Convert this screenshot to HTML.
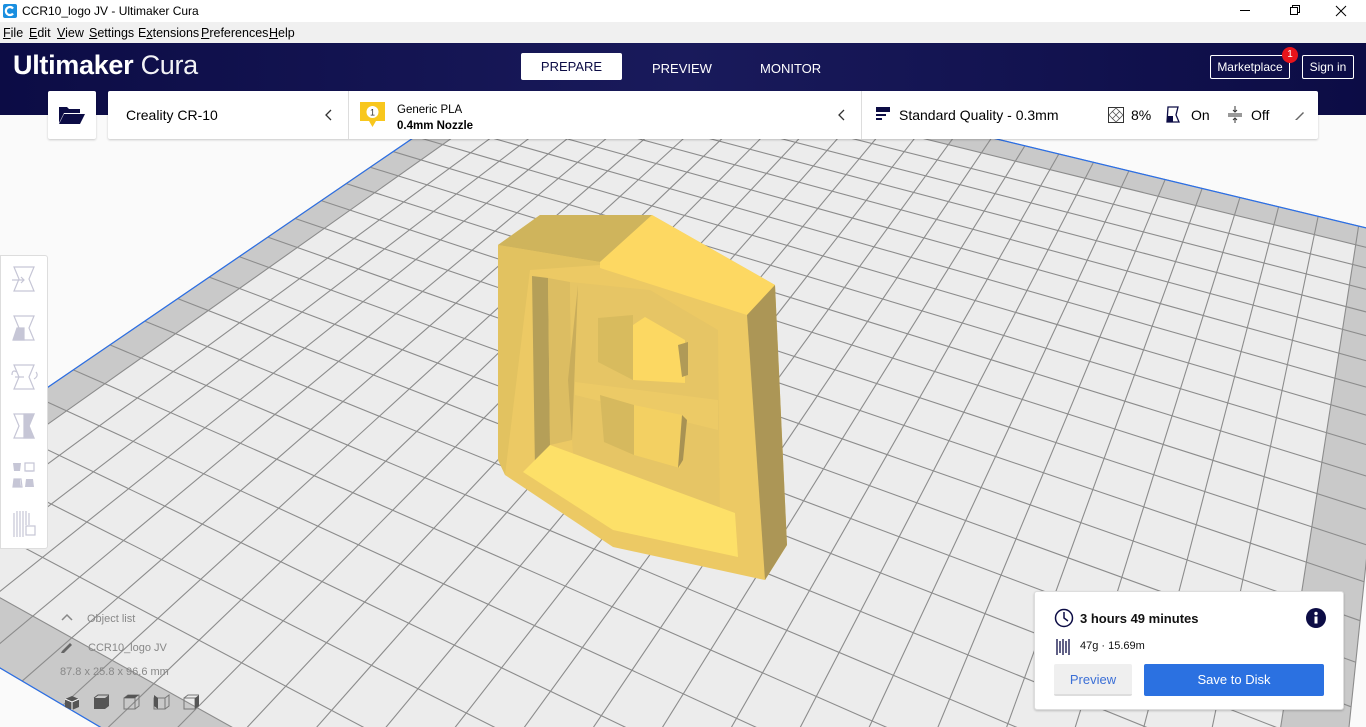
<!DOCTYPE html>
<html style="overflow:hidden;width:1366px;height:727px"><head><meta charset="utf-8"><style>
*{margin:0;padding:0;box-sizing:border-box}
body{width:1366px;height:727px;overflow:hidden;position:relative;background:#fafafa;font-family:"Liberation Sans",sans-serif}
.abs{position:absolute}
#title{left:0;top:0;width:1366px;height:22px;background:#fff;font-size:12px;color:#000}
#menu{left:0;top:22px;width:1366px;height:21px;background:#f0f0f0;font-size:12.5px}
#menu span{position:absolute;top:4px}
#menu u{text-decoration:underline}
#head{left:0;top:43px;width:1366px;height:72px;background:linear-gradient(90deg,#0c0c45,#191a5b 50%,#0c0c45)}
.card{background:#fff;box-shadow:0 1px 2px rgba(0,0,0,.2);border-radius:2px}
.tab{color:#fff;font-size:13px;top:61px}
.btnw{border:1px solid #fff;border-radius:2px;color:#fff;font-size:12px;text-align:center;line-height:22px}
</style></head><body>
<svg class="abs" style="left:0;top:0;overflow:hidden" width="1366" height="727" id="scene"></svg>

<div id="title" class="abs">
 <svg class="abs" style="left:3px;top:4px" width="14" height="14"><rect width="14" height="14" rx="2" fill="#1a8fe0"/><path d="M10 4.5A4 4 0 1 0 10 9.5" stroke="#fff" stroke-width="2.2" fill="none"/></svg>
 <span class="abs" style="left:22px;top:4px">CCR10_logo JV - Ultimaker Cura</span>
 <span class="abs" style="left:1240px;top:10px;width:10px;height:1px;background:#000"></span>
 <svg class="abs" style="left:1289px;top:4px" width="12" height="12"><rect x="1.5" y="3.5" width="7" height="7" fill="none" stroke="#000"/><path d="M3.5 3.5V1.5H10.5V8.5H8.5" fill="none" stroke="#000"/></svg>
 <svg class="abs" style="left:1335px;top:5px" width="12" height="12"><path d="M1 1L11 11M11 1L1 11" stroke="#000"/></svg>
</div>
<div id="menu" class="abs">
 <span style="left:3px"><u>F</u>ile</span><span style="left:29px"><u>E</u>dit</span><span style="left:57px"><u>V</u>iew</span><span style="left:89px"><u>S</u>ettings</span><span style="left:138px">E<u>x</u>tensions</span><span style="left:201px"><u>P</u>references</span><span style="left:269px"><u>H</u>elp</span>
</div>
<div id="head" class="abs">
 <div class="abs" style="left:13px;top:7px;color:#fff;font-size:27px;letter-spacing:-.3px"><b style="font-weight:600">Ultimaker</b> <span style="font-weight:300;opacity:.95">Cura</span></div>
 <div class="abs" style="left:521px;top:10px;width:101px;height:27px;background:#fff;border-radius:2px;font-size:13px;color:#0c0c45;text-align:center;line-height:27px">PREPARE</div>
 <div class="btnw abs" style="left:1210px;top:12px;width:80px;height:24px">Marketplace</div>
 <div class="abs" style="left:1282px;top:4px;width:16px;height:16px;border-radius:8px;background:#e8141b;color:#fff;font-size:10px;text-align:center;line-height:16px">1</div>
 <div class="btnw abs" style="left:1302px;top:12px;width:52px;height:24px">Sign in</div>
</div>
<div class="tab abs" style="left:652px">PREVIEW</div>
<div class="tab abs" style="left:760px">MONITOR</div>

<div class="card abs" style="left:48px;top:91px;width:48px;height:48px">
 <svg class="abs" style="left:10px;top:14px" width="28" height="20"><path d="M1 2H9L11 4H22V8H6L1 18Z" fill="#0c0c45"/><path d="M6 9H27L22 19H1Z" fill="#0c0c45"/></svg>
</div>
<div class="card abs" style="left:108px;top:91px;width:1210px;height:48px"></div>
<div class="abs" style="left:348px;top:91px;width:1px;height:48px;background:#ddd"></div>
<div class="abs" style="left:861px;top:91px;width:1px;height:48px;background:#ddd"></div>
<div class="abs" style="left:126px;top:107px;font-size:14px;color:#000">Creality CR-10</div>
<svg class="abs" style="left:325px;top:109px" width="8" height="12"><path d="M6 1L1 6L6 11" stroke="#333" fill="none" stroke-width="1.3"/></svg>
<svg class="abs" style="left:360px;top:102px" width="26" height="26"><path d="M0 0H25V19H16L12.5 25L9 19H0Z" fill="#f8c71d"/><circle cx="12.5" cy="10" r="6" fill="#fff"/><text x="12.5" y="13.5" font-size="9" text-anchor="middle" font-family="Liberation Sans" fill="#333">1</text></svg>
<div class="abs" style="left:397px;top:104px;font-size:11.5px;color:#000">Generic PLA</div>
<div class="abs" style="left:397px;top:120px;font-size:11.5px;font-weight:bold;color:#000">0.4mm Nozzle</div>
<svg class="abs" style="left:838px;top:109px" width="8" height="12"><path d="M6 1L1 6L6 11" stroke="#333" fill="none" stroke-width="1.3"/></svg>
<svg class="abs" style="left:876px;top:107px" width="14" height="16"><rect x="0" y="0" width="14" height="5" fill="#0c0c45"/><rect x="0" y="7" width="10" height="2" fill="#0c0c45"/><rect x="0" y="11" width="6" height="2" fill="#0c0c45"/></svg>
<div class="abs" style="left:899px;top:107px;font-size:14px">Standard Quality - 0.3mm</div>
<svg class="abs" style="left:1108px;top:107px" width="16" height="16"><rect x=".5" y=".5" width="15" height="15" fill="none" stroke="#333"/><path d="M1 8L8 1L15 8L8 15Z M4 4L12 12M12 4L4 12" fill="none" stroke="#555" stroke-width=".8"/></svg>
<div class="abs" style="left:1131px;top:107px;font-size:14px">8%</div>
<svg class="abs" style="left:1166px;top:106px" width="16" height="17"><path d="M2 1H12L10 9L13 16H1Z" fill="none" stroke="#0c0c45" stroke-width="1.3"/><path d="M1 10H7V16H1Z" fill="#0c0c45"/></svg>
<div class="abs" style="left:1191px;top:107px;font-size:14px">On</div>
<svg class="abs" style="left:1228px;top:106px" width="14" height="17"><path d="M0 8H14M0 10H14M7 0V6M7 12V17M5 4L7 6L9 4M5 14L7 12L9 14" stroke="#333" fill="none"/></svg>
<div class="abs" style="left:1251px;top:107px;font-size:14px">Off</div>
<svg class="abs" style="left:1294px;top:109px" width="12" height="12"><path d="M2 10L9 3L10 4L3 11L1 11Z" fill="#666"/></svg>

<div class="card abs" style="left:0;top:255px;width:48px;height:294px;border:1px solid #ddd;border-radius:0 3px 3px 0;box-shadow:none">
 <svg width="48" height="294" style="position:absolute;left:-1px;top:-1px" fill="none" stroke="#c6c6d6" stroke-width="1.2">
  <g transform="translate(12,12)"><path d="M2 0H22L17 12L22 24H2L7 12Z"/><path d="M0 13H12M9 10L12 13L9 16" /></g>
  <g transform="translate(12,61)"><path d="M2 0H22L17 12L22 24H2L7 12Z"/><path d="M1 24L5 12H12V24Z" fill="#c6c6d6"/></g>
  <g transform="translate(12,110)"><path d="M2 0H22L17 12L22 24H2L7 12Z"/><path d="M0 10Q0 4 5 7M24 7Q27 11 22 14M3 12H12"/></g>
  <g transform="translate(12,159)"><path d="M2 0H22L17 12L22 24H2L7 12Z"/><path d="M12 0V24M12 0H22L17 12L22 24H12Z" fill="#c6c6d6"/></g>
  <g transform="translate(12,208)" fill="#c6c6d6"><path d="M1 0H9L8 8H2Z M1 24H9L8 16H2Z M13 24H22L21 16H14Z" stroke="none"/><path d="M13 0H22V8H13Z" fill="none"/><path d="M2 16H9L10 24H1Z M14 8H21" fill="none"/></g>
  <g transform="translate(12,256)"><path d="M2 2V26M5 0V26M8 0V26M11 0V26M14 0V14M17 2V14"/><rect x="14" y="15" width="9" height="9" fill="#fff"/></g>
 </svg>
</div>

<svg class="abs" style="left:60px;top:612px" width="14" height="10"><path d="M2 8L7 3L12 8" stroke="#888" fill="none" stroke-width="1.5"/></svg>
<div class="abs" style="left:87px;top:613px;font-size:11px;color:#888">Object list</div>
<svg class="abs" style="left:60px;top:640px" width="14" height="14"><path d="M2 11L10 3L12 5L4 13L1 13Z" fill="#666"/></svg>
<div class="abs" style="left:88px;top:642px;font-size:11px;color:#888">CCR10_logo JV</div>
<div class="abs" style="left:60px;top:666px;font-size:11px;color:#888">87.8 x 25.8 x 96.6 mm</div>
<svg class="abs" style="left:62px;top:694px" width="140" height="20">
 <path d="M10 2L17 5V13L10 16L3 13V5Z" fill="#555"/><path d="M3 5L10 8L17 5M10 8V16" stroke="#fafafa" fill="none"/>
 <path d="M32 4H43L47 1V12L43 15H32Z" fill="#555"/><path d="M32 4L36 1H47" stroke="#555" fill="none"/>
 <path d="M62 4H73V15H62Z M62 4L66 1H77V12L73 15" stroke="#777" fill="none"/><path d="M62 4L66 1H77L73 4Z" fill="#555"/>
 <path d="M92 4H103V15H92Z M103 4L107 1V12L103 15" stroke="#777" fill="none"/><path d="M92 1L96 4V15L92 12Z" fill="#555"/>
 <path d="M122 4H133V15H122Z M122 4L126 1H137" stroke="#777" fill="none"/><path d="M133 4L137 1V12L133 15Z" fill="#555"/>
</svg>

<div class="card abs" style="left:1034px;top:591px;width:310px;height:119px;border:1px solid #ddd;border-radius:3px">
 <svg class="abs" style="left:19px;top:16px" width="20" height="20"><circle cx="10" cy="10" r="8.5" fill="none" stroke="#0c0c45" stroke-width="1.5"/><path d="M10 4V10L14 13" stroke="#0c0c45" fill="none" stroke-width="1.5"/></svg>
 <div class="abs" style="left:45px;top:19px;font-size:13px;font-weight:bold;color:#111">3 hours 49 minutes</div>
 <svg class="abs" style="left:271px;top:16px" width="20" height="20"><circle cx="10" cy="10" r="10" fill="#0c0c45"/><rect x="8.5" y="8.5" width="3" height="7" fill="#fff"/><circle cx="10" cy="5.5" r="1.7" fill="#fff"/></svg>
 <svg class="abs" style="left:21px;top:46px" width="16" height="18"><path d="M1 1V17M4 3V15M7 1V17M10 3V15M13 1V17" stroke="#0c0c45" stroke-width="1.3"/></svg>
 <div class="abs" style="left:45px;top:48px;font-size:11px;color:#111">47g · 15.69m</div>
 <div class="abs" style="left:19px;top:72px;width:78px;height:32px;background:#efefef;border-bottom:2px solid #ddd;border-radius:2px;color:#3b6fd6;font-size:13px;text-align:center;line-height:31px">Preview</div>
 <div class="abs" style="left:109px;top:72px;width:180px;height:32px;background:#2b71e1;border-radius:2px;color:#fff;font-size:13px;text-align:center;line-height:31px">Save to Disk</div>
</div>

<script>
(function(){
var s=document.getElementById('scene'),NS='http://www.w3.org/2000/svg';
var B=[564,35],R=[1400,236],F=[1277,1421],L=[-195,553];
function H(){var x0=B[0],y0=B[1],x1=R[0],y1=R[1],x2=F[0],y2=F[1],x3=L[0],y3=L[1];
var dx1=x1-x2,dx2=x3-x2,dy1=y1-y2,dy2=y3-y2,sx=x0-x1+x2-x3,sy=y0-y1+y2-y3;
var d=dx1*dy2-dx2*dy1,g=(sx*dy2-dx2*sy)/d,h=(dx1*sy-sx*dy1)/d;
return [x1-x0+g*x1,x3-x0+h*x3,x0,y1-y0+g*y1,y3-y0+h*y3,y0,g,h];}
var m=H();function P(u,v){var w=m[6]*u+m[7]*v+1;return [(m[0]*u+m[1]*v+m[2])/w,(m[3]*u+m[4]*v+m[5])/w];}
function el(t,a){var e=document.createElementNS(NS,t);for(var k in a)e.setAttribute(k,a[k]);s.appendChild(e);return e;}
function poly(pts,f){el('polygon',{points:pts.map(function(p){return p[0].toFixed(1)+','+p[1].toFixed(1)}).join(' '),fill:f});}
var N=26,b=1/N;
poly([P(0,0),P(1,0),P(1,1),P(0,1)],'#c9c9c9');
poly([P(b,b),P(1-b,b),P(1-b,1-b),P(b,1-b)],'#ececec');
for(var i=0;i<=N;i++){var t=i/N,a=P(t,0),c=P(t,1);el('line',{x1:a[0],y1:a[1],x2:c[0],y2:c[1],stroke:'#8c8c8c','stroke-width':1.1});
a=P(0,t);c=P(1,t);el('line',{x1:a[0],y1:a[1],x2:c[0],y2:c[1],stroke:'#8c8c8c','stroke-width':1.1});}
el('polyline',{points:[P(0,1),P(0,0),P(1,0)].map(function(p){return p.join(',')}).join(' '),fill:'none',stroke:'#2a6fe8','stroke-width':1.2});
el('line',{x1:L[0],y1:L[1],x2:F[0],y2:F[1],stroke:'#2a6fe8','stroke-width':1.2});
var M=[
[[[498,245],[540,215],[652,215],[775,285],[787,545],[765,580],[613,547],[505,475]],'#ecc964'],
[[[498,245],[540,215],[652,215],[608,255],[600,262]],'#cfb45c'],
[[[498,245],[600,262],[600,265],[530,270],[505,475],[498,460]],'#e2c260'],
[[[600,262],[652,215],[775,285],[747,315],[600,268]],'#fdd862'],
[[[747,315],[775,285],[787,545],[765,580]],'#ac9656'],
[[[532,276],[548,278],[550,445],[535,470]],'#b59f58'],
[[[548,278],[570,282],[572,440],[550,445]],'#dcbd62'],
[[[570,282],[650,290],[718,330],[720,520],[650,505],[575,480],[572,440]],'#e6c565'],
[[[523,472],[550,445],[735,513],[738,557],[613,530]],'#fde068'],
[[[578,285],[572,440],[568,380]],'#c9ad5b'],
[[[598,318],[633,315],[633,380],[598,362]],'#d8bb5e'],
[[[633,325],[645,317],[685,340],[685,383],[633,380]],'#fcd862'],
[[[678,345],[688,342],[688,375],[682,377]],'#b09a57'],
[[[575,395],[718,430],[718,400],[575,382]],'#ecca66'],
[[[600,395],[634,405],[634,455],[604,442]],'#d6b95e'],
[[[634,405],[682,415],[680,468],[634,455]],'#f3d062'],
[[[682,415],[687,420],[683,460],[678,468]],'#a89253']
];
M.forEach(function(q){poly(q[0],q[1]);});
})();
</script>
</body></html>
